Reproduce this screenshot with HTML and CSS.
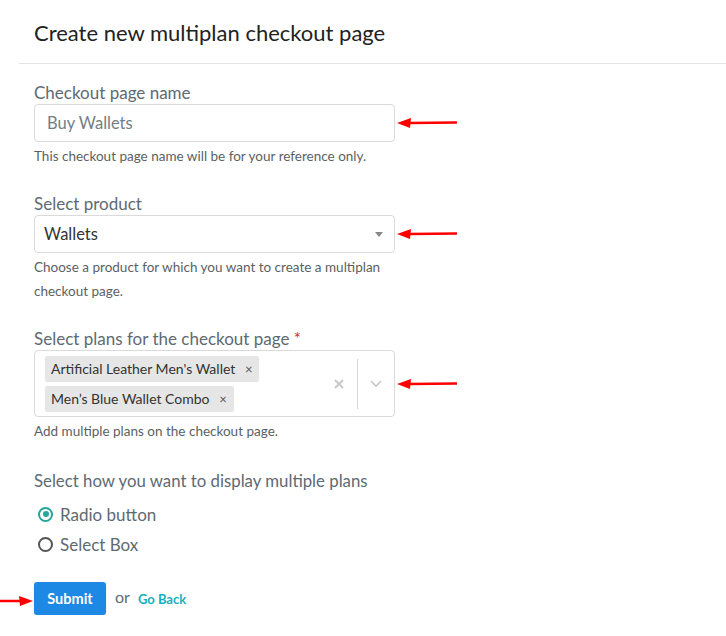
FILE: index.html
```html
<!DOCTYPE html>
<html>
<head>
<meta charset="utf-8">
<link rel="stylesheet" href="styles.css">
</head>
<body>
<div class="card">
  <div class="header"><h1 class="title">Create new multiplan checkout page</h1></div>
  <div class="form">
    <div class="group g1">
      <label class="label">Checkout page name</label>
      <div class="row">
        <div class="input placeholder">Buy Wallets</div>
        <svg class="arrow" width="62" height="12" viewBox="0 0 62 12"><path d="M62 5.5 L14 6" stroke="#f00" stroke-width="2.5" fill="none"/><path d="M2 6 L16 1 L15 11 Z" fill="#f00"/></svg>
      </div>
      <div class="help">This checkout page name will be for your reference only.</div>
    </div>

    <div class="group g2">
      <label class="label">Select product</label>
      <div class="row">
        <div class="input select"><span>Wallets</span><span class="caret"></span></div>
        <svg class="arrow" width="62" height="12" viewBox="0 0 62 12"><path d="M62 5.5 L14 6" stroke="#f00" stroke-width="2.5" fill="none"/><path d="M2 6 L16 1 L15 11 Z" fill="#f00"/></svg>
      </div>
      <div class="help tall">Choose a product for which you want to create a multiplan checkout page.</div>
    </div>

    <div class="group g3">
      <label class="label">Select plans for the checkout page <span class="req">*</span></label>
      <div class="row">
        <div class="multi">
          <div class="tags">
            <span class="tag">Artificial Leather Men's Wallet <span class="x">×</span></span>
            <span class="tag">Men’s Blue Wallet Combo <span class="x">×</span></span>
          </div>
          <div class="controls">
            <svg class="clear" width="12" height="12" viewBox="0 0 12 12"><path d="M2 2 L10 10 M10 2 L2 10" stroke="#c8c8c8" stroke-width="2"/></svg>
            <span class="sep"></span>
            <svg class="chev" width="14" height="9" viewBox="0 0 14 9"><path d="M2 2 L7 7 L12 2" stroke="#c8c8c8" stroke-width="1.6" fill="none"/></svg>
          </div>
        </div>
        <svg class="arrow" width="62" height="12" viewBox="0 0 62 12"><path d="M62 5.5 L14 6" stroke="#f00" stroke-width="2.5" fill="none"/><path d="M2 6 L16 1 L15 11 Z" fill="#f00"/></svg>
      </div>
      <div class="help">Add multiple plans on the checkout page.</div>
    </div>

    <div class="group g4">
      <div class="label">Select how you want to display multiple plans</div>
      <div class="radio"><span class="dot on"></span>Radio button</div>
      <div class="radio"><span class="dot"></span>Select Box</div>
    </div>

    <div class="actions">
      <svg class="arrow-l" width="34" height="12" viewBox="0 0 34 12"><path d="M0 6 L22 6" stroke="#f00" stroke-width="2.5" fill="none"/><path d="M33 6 L19 1 L20 11 Z" fill="#f00"/></svg>
      <button class="submit">Submit</button>
      <span class="or">or</span>
      <a class="back">Go Back</a>
    </div>
  </div>
</div>
</body>
</html>
```

FILE: styles.css
```css
* { box-sizing: border-box; }
body {
  margin: 0;
  background: #fff;
  font-family: Lato, "Open Sans", sans-serif;
}
.card {
  margin-left: 19px;
}
.header {
  padding: 21px 15px 18px;
  border-bottom: 1px solid #e4e4e4;
}
.title {
  margin: 0;
  font-size: 22px;
  line-height: 24px;
  font-weight: 400;
  color: #222;
}
.form {
  padding: 19px 0 0 0;
}
.group {
  padding-left: 15px;
}
.label {
  display: block;
  font-size: 17px;
  line-height: 20px;
  color: #5e6a72;
  margin-bottom: 1px;
}
.req { color: #c0392b; }
.row {
  display: flex;
  align-items: center;
}
.input {
  width: 361px;
  height: 38px;
  border: 1px solid #dadada;
  border-radius: 4px;
  padding: 0 12px;
  display: flex;
  align-items: center;
  font-size: 16.5px;
}
.placeholder { color: #727e86; }
.select {
  padding: 0 9px;
  color: #333;
  justify-content: space-between;
}
.caret {
  width: 0; height: 0;
  border-left: 4px solid transparent;
  border-right: 4px solid transparent;
  border-top: 5px solid #888;
  margin-right: 2px;
}
.help {
  font-size: 13.5px;
  color: #5b5f63;
  line-height: 16px;
  margin-top: 6px;
}
.help.tall {
  line-height: 24px;
  margin-top: 2px;
  width: 370px;
}
.g2 { margin-top: 30px; }
.g3 { margin-top: 26px; }
.g4 { margin-top: 32px; }
.multi {
  width: 361px;
  height: 67px;
  border: 1px solid #dadada;
  border-radius: 4px;
  display: flex;
  align-items: center;
}
.tags {
  flex: 1;
  padding: 4px 0 4px 10px;
  display: flex;
  flex-direction: column;
  align-items: flex-start;
  gap: 4px;
}
.tag {
  background: #e6e6e6;
  border-radius: 2px;
  font-size: 14px;
  color: #333;
  height: 26px;
  line-height: 26px;
  padding: 0 7px 0 6px;
}
.tag .x {
  color: #555;
  font-size: 13px;
  margin-left: 6px;
}
.controls {
  display: flex;
  align-items: center;
  height: 50px;
}
.clear { margin-right: 12px; }
.sep {
  width: 1px;
  height: 50px;
  background: #d6d6d6;
}
.chev { margin: 0 11px 0 11px; }
.radio {
  display: flex;
  align-items: center;
  font-size: 17px;
  color: #5e6a72;
  height: 30px;
  margin-left: 4px;
}
.g4 .label { margin-bottom: 8px; font-size: 16.8px; }
.dot {
  width: 15px;
  height: 15px;
  border: 2px solid #555;
  border-radius: 50%;
  margin-right: 7px;
  display: inline-block;
  position: relative;
}
.dot.on {
  border-color: #26a69a;
}
.dot.on::after {
  content: "";
  position: absolute;
  left: 2.5px; top: 2.5px;
  width: 6px; height: 6px;
  border-radius: 50%;
  background: #26a69a;
}
.actions {
  display: flex;
  align-items: center;
  margin-left: -19px;
  margin-top: 23px;
}
.arrow-l { margin-top: 4px; }
.submit {
  width: 72px;
  height: 33px;
  border: none;
  border-radius: 3px;
  background: #1e88e5;
  color: #fff;
  font-family: Lato, sans-serif;
  font-weight: 700;
  font-size: 14.5px;
  box-shadow: 0 2px 3px rgba(0,0,0,0.12);
}
.or {
  font-size: 16px;
  color: #5e6a72;
  margin-left: 9px;
  margin-right: 8px;
  margin-top: -4px;
}
.back {
  font-size: 13px;
  font-weight: 700;
  color: #17b0bf;
}
```
